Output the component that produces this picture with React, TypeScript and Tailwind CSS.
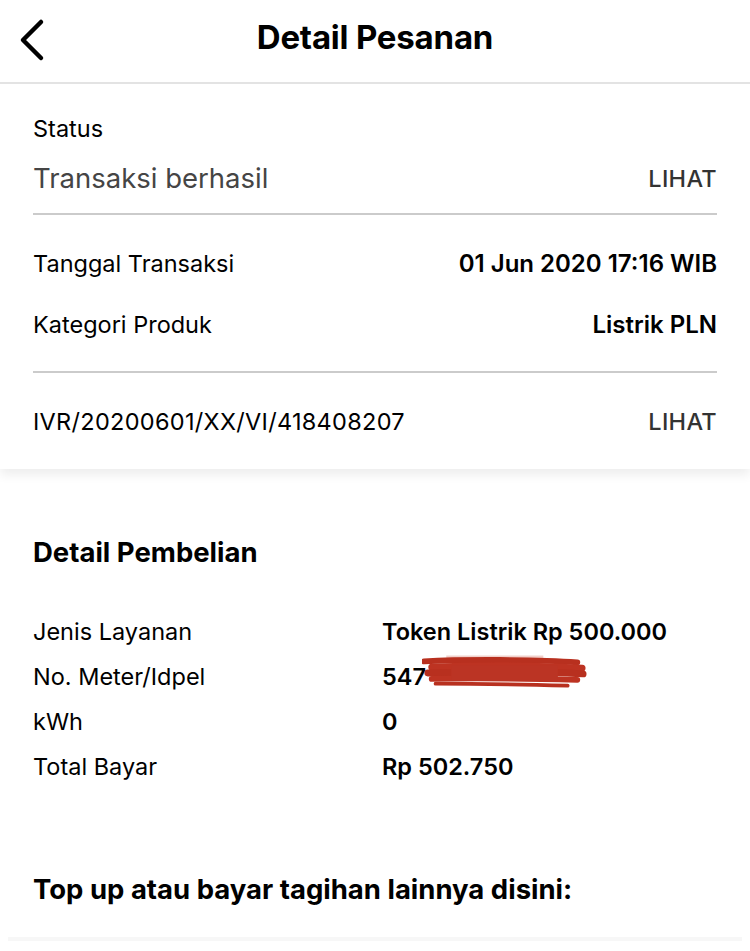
import React from "react";

const font = { fontFamily: "Inter, Roboto, 'Liberation Sans', sans-serif" };

function Redact() {
  return (
    <svg width="165" height="40" viewBox="0 0 170 40" className="absolute left-[40px] top-[-6px]">
      <rect x="25" y="2" width="100" height="8" fill="#e8b0a8" opacity="0.6" />
      <path d="M2 8 C40 6 120 6 160 9" stroke="#b8301f" strokeWidth="6" fill="none" strokeLinecap="round" />
      <path d="M10 14 C50 12 120 12 165 15" stroke="#bd3322" strokeWidth="7" fill="none" strokeLinecap="round" />
      <path d="M6 20 C50 19 120 18 166 21" stroke="#b8301f" strokeWidth="7" fill="none" strokeLinecap="round" />
      <path d="M10 26 C60 25 120 26 160 27" stroke="#bd3322" strokeWidth="6" fill="none" strokeLinecap="round" />
      <path d="M14 31 C60 31 110 32 150 33" stroke="#b8301f" strokeWidth="4" fill="none" strokeLinecap="round" />
      <path d="M30 12 L140 12 L140 28 L30 28 Z" fill="#bb3424" />
    </svg>
  );
}

export default function App() {
  return (
    <div className="w-[750px] h-[951px] bg-white overflow-hidden text-black" style={font}>
      <div className="relative h-[84px] border-b-2 border-[#e3e3e3] flex items-center justify-center">
        <svg width="30" height="44" viewBox="0 0 30 44" className="absolute left-[15px] top-[18px]">
          <path d="M26 4 L8 22 L26 40" stroke="#000" strokeWidth="4.5" fill="none" strokeLinecap="round" strokeLinejoin="round" />
        </svg>
        <div className="text-[33px] font-bold tracking-[-0.2px] mt-[-6px]">Detail Pesanan</div>
      </div>

      <div className="px-[33px] shadow-[0_6px_10px_rgba(0,0,0,0.07)]">
        <div className="pt-[30px] text-[23.5px] leading-[30px]">Status</div>
        <div className="flex justify-between items-center mt-[20px] h-[30px]">
          <span className="text-[27.5px] text-[#454545]">Transaksi berhasil</span>
          <span className="text-[23.5px] font-medium text-[#333] tracking-[0.3px]">LIHAT</span>
        </div>
        <div className="h-[2px] bg-[#cbcbcb] mt-[19px]" />
        <div className="flex justify-between items-center mt-[34px] h-[30px] text-[23.5px]">
          <span>Tanggal Transaksi</span>
          <span className="font-semibold text-[24px]">01 Jun 2020 17:16 WIB</span>
        </div>
        <div className="flex justify-between items-center mt-[31px] h-[30px] text-[23.5px]">
          <span>Kategori Produk</span>
          <span className="font-semibold text-[24px]">Listrik PLN</span>
        </div>
        <div className="h-[2px] bg-[#cbcbcb] mt-[31px]" />
        <div className="flex justify-between items-center mt-[34px] h-[30px] text-[23.5px]">
          <span className="tracking-[0.3px]">IVR/20200601/XX/VI/418408207</span>
          <span className="font-medium text-[#333] tracking-[0.3px]">LIHAT</span>
        </div>
        <div className="h-[32px]" />
      </div>

      <div className="px-[33px]">
        <div className="mt-[66px] text-[27.5px] font-bold h-[34px] leading-[34px]">Detail Pembelian</div>
        <div className="mt-[40px] flex flex-col text-[23.5px]">
          {[
            ["Jenis Layanan", "Token Listrik Rp 500.000"],
            ["No. Meter/Idpel", "547"],
            ["kWh", "0"],
            ["Total Bayar", "Rp 502.750"],
          ].map(([k, v], i) => (
            <div key={k} className="flex h-[45px] items-center">
              <span className="w-[349px]">{k}</span>
              <span className="relative font-semibold text-[23.5px]">
                {v}
                {i === 1 && <Redact />}
              </span>
            </div>
          ))}
        </div>
        <div className="mt-[82px] text-[27.5px] font-bold h-[36px] leading-[36px]">Top up atau bayar tagihan lainnya disini:</div>
      </div>
      <div className="mt-[30px] mx-[8px] h-[4px] bg-[#f7f7f7]" />
    </div>
  );
}
